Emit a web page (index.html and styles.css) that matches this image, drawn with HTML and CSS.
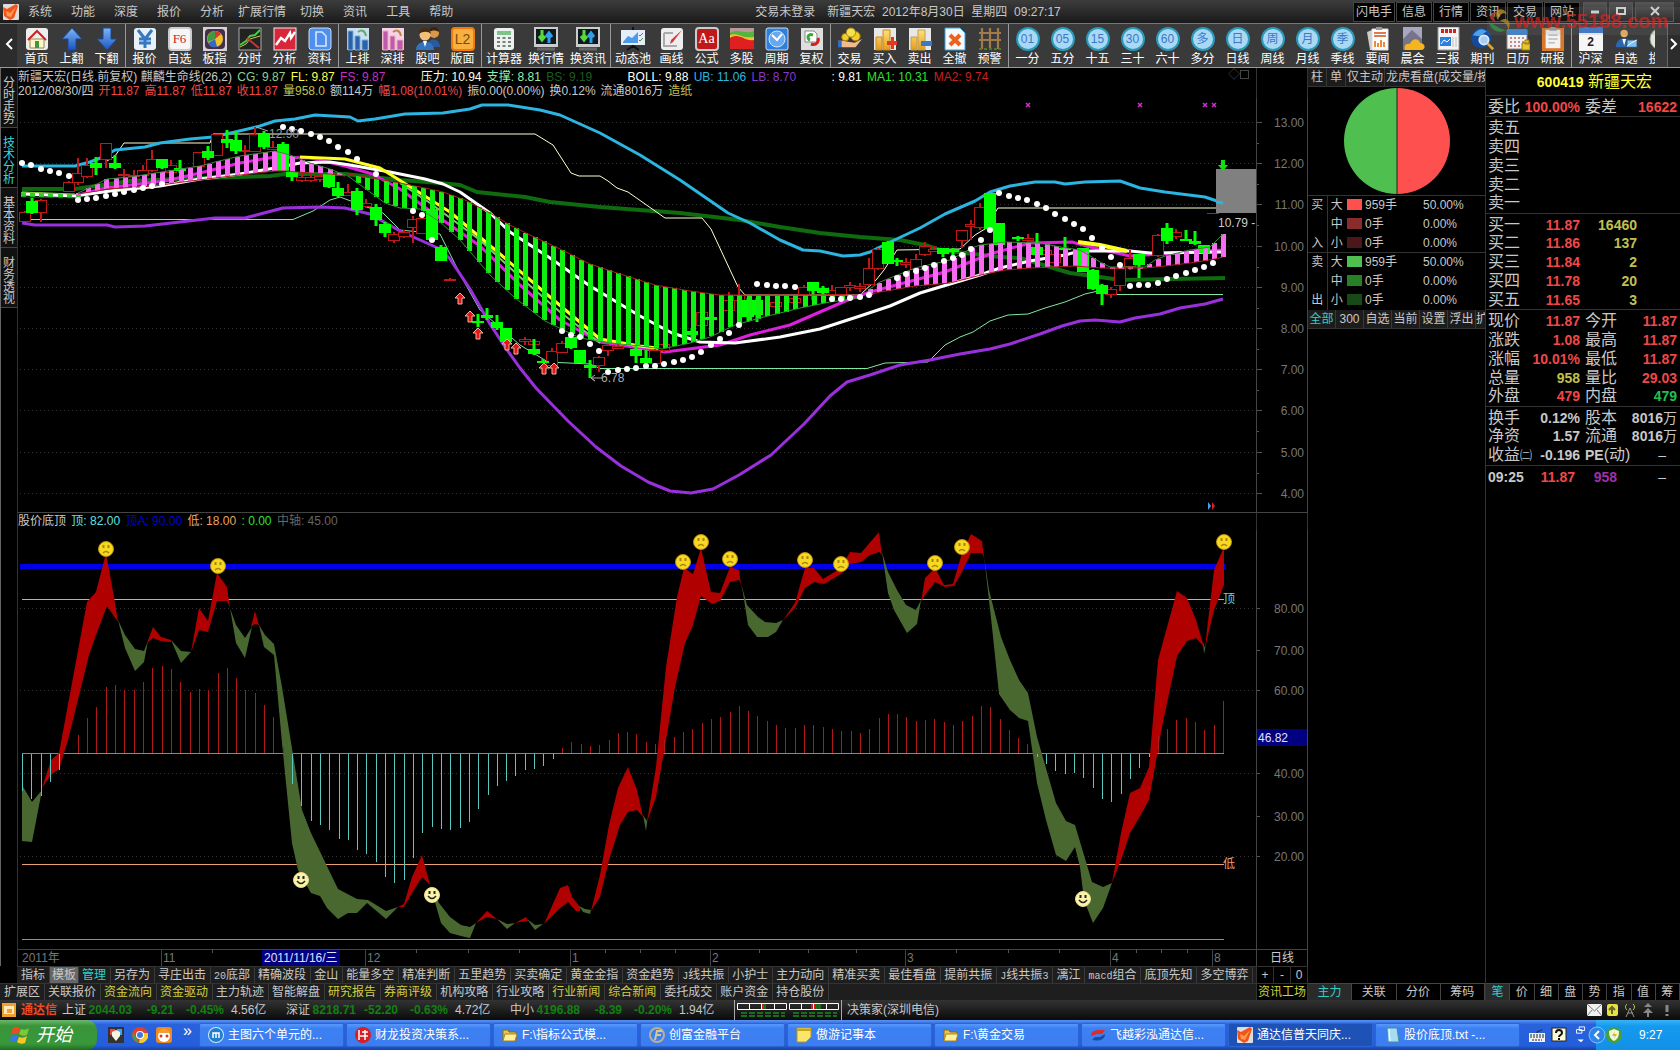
FILE: index.html
```html
<!DOCTYPE html>
<html lang="zh-CN">
<head>
    <meta charset="UTF-8">
    <meta name="viewport" content="width=device-width, initial-scale=1.0">
    <title>通达信</title>
    <link rel="stylesheet" href="styles.css">
</head>
<body>
<svg class="defs" aria-hidden="true">
    <defs>
        <linearGradient id="gBlue" x1="0" y1="0" x2="0" y2="1"><stop offset="0" stop-color="#7db6f5"/><stop offset="1" stop-color="#1a55c4"/></linearGradient>
        <linearGradient id="gGold" x1="0" y1="0" x2="0" y2="1"><stop offset="0" stop-color="#ffe27a"/><stop offset="1" stop-color="#e59a1c"/></linearGradient>
    </defs>
    <symbol id="logo" viewBox="0 0 16 16"><rect width="16" height="16" rx="1" fill="#ddd"/><path d="M0 3l4 2 9-5 2 2-4 12-4 2-6-4z" fill="#f2541b"/><path d="M3 7l4 2 6-6-5 10-4-1z" fill="#ff9a4d"/></symbol>
    <symbol id="home" viewBox="0 0 24 24"><rect x="1" y="1" width="22" height="22" rx="3" fill="#eee"/><path d="M5 12h14v9H5z" fill="#fff5c8" stroke="#9a8a4a"/><path d="M3 13l9-9 9 9" fill="none" stroke="#c22" stroke-width="2"/><path d="M10 14h4v7h-4z" fill="#3a9a3a"/></symbol>
    <symbol id="up" viewBox="0 0 24 24"><path d="M12 1l10 11h-6v11H8V12H2z" fill="url(#gBlue)" stroke="#1b4796"/></symbol>
    <symbol id="down" viewBox="0 0 24 24"><path d="M12 23l10-11h-6V1H8v11H2z" fill="url(#gBlue)" stroke="#1b4796"/></symbol>
    <symbol id="yen" viewBox="0 0 24 24"><rect x="1" y="1" width="22" height="22" rx="3" fill="#e8f0f8"/><path d="M5 3l7 9 7-9M12 12v9M6 12h12M6 16h12" fill="none" stroke="#3578c2" stroke-width="3"/></symbol>
    <symbol id="pie" viewBox="0 0 24 24"><rect width="24" height="24" fill="#d8d0d4"/><rect x="2" y="2" width="20" height="20" rx="4" fill="#40304e"/><circle cx="12" cy="12" r="8" fill="#f0c22a"/><path d="M12 12V4a8 8 0 0 0-7 11z" fill="#3f9a3f"/><path d="M12 12l-7 4a8 8 0 0 0 9 4z" fill="#3668c8"/><path d="M12 12V4a8 8 0 0 1 6 3z" fill="#d33"/></symbol>
    <symbol id="fen" viewBox="0 0 24 24"><rect x="1" y="1" width="22" height="22" fill="#222" stroke="#aaa"/><path d="M2 18l6-4 4-5 5-1 5-5" fill="none" stroke="#4c4" stroke-width="2"/><path d="M2 20l6-3 4-5 10-3" fill="none" stroke="#cc4"/><path d="M9 11l6 5 6 5" fill="none" stroke="#c33" stroke-width="2"/></symbol>
    <symbol id="zig" viewBox="0 0 24 24"><rect x="1" y="1" width="22" height="22" fill="#d8263a" stroke="#eee"/><path d="M3 18l5-7 4 3 5-8 1 5 4-6" fill="none" stroke="#fff" stroke-width="2.4"/></symbol>
    <symbol id="doc" viewBox="0 0 24 24"><rect x="1" y="1" width="22" height="22" rx="3" fill="#4f8ff0" stroke="#cde"/><path d="M8 5h6l4 4v10H8z" fill="none" stroke="#d6e7ff" stroke-width="1.6"/></symbol>
    <symbol id="rank" viewBox="0 0 24 24"><rect x="1" y="1" width="22" height="22" fill="#c9dff2"/><path d="M2 4h5v19H2zM9 9h5v14H9zM16 13h6v10h-6z" fill="#2b63a8" stroke="#7aa7d8"/><path d="M12 5c4-3 7-1 8 4" fill="none" stroke="#6a6" stroke-width="2"/></symbol>
    <symbol id="rank2" viewBox="0 0 24 24"><rect x="1" y="1" width="22" height="22" fill="#f7d3ea"/><path d="M2 4h5v19H2zM9 9h5v14H9zM16 13h6v10h-6z" fill="#bf5bab" stroke="#eab"/><path d="M12 5c4-3 7-1 8 4" fill="none" stroke="#b84" stroke-width="2"/></symbol>
    <symbol id="users" viewBox="0 0 24 24"><circle cx="18" cy="6" r="5" fill="#d8974a"/><path d="M13 5c0-7 10-7 10 0-3-2-7-2-10 0z" fill="#3a2410"/><path d="M11 20c0-10 13-10 13 0z" fill="#2a5a9c"/><circle cx="9" cy="8" r="5.500" fill="#f3c07a"/><path d="M3 7c0-8 11-8 12 0-3-3-8-3-12 0z" fill="#4a2c10"/><path d="M0 23c0-11 18-11 18 0z" fill="#3573c0"/><path d="M7 14h4l-2 6z" fill="#fff"/></symbol>
    <symbol id="calc" viewBox="0 0 24 24"><rect x="2" y="1" width="20" height="22" rx="3" fill="#eef2ee"/><rect x="5" y="4" width="14" height="4" fill="#7cc48a"/><path d="M5 11h14M5 15h14M5 19h14" stroke="#78827c" stroke-width="2" stroke-dasharray="3 2.500"/></symbol>
    <symbol id="screen" viewBox="0 0 24 24"><path d="M0 0h24v20H0z" fill="#ccc"/><path d="M2 2h20v15H2z" fill="#0c1a20"/><path d="M8 3v9M5 9l3 4 3-4" stroke="#5ad83a" stroke-width="3" fill="none"/><path d="M15 16V7M12 10l3-4 3 4" stroke="#2e9fe8" stroke-width="3" fill="none"/><path d="M3 22h18" stroke="#666" stroke-width="3"/></symbol>
    <symbol id="board" viewBox="0 0 24 24"><path d="M0 3h24v15H0z" fill="#e3eefa"/><path d="M2 15l5-6 4 2 6-6v11H2z" fill="#4d9be6"/><path d="M18 8l1 1 3-3M18 13l1 1 3-3" stroke="#4a8a4a" fill="none"/><path d="M12 0v3M12 18v3M6 23l6-4 6 4" stroke="#111" stroke-width="2" fill="none"/></symbol>
    <symbol id="draw" viewBox="0 0 24 24"><rect x="1" y="1" width="22" height="22" rx="3" fill="#eee"/><path d="M4 6h9M4 6v13h13" stroke="#aaa" stroke-width="2" fill="none"/><path d="M22 3l-9 12-3 2 1-4z" fill="#d23a3a"/></symbol>
    <symbol id="multi" viewBox="0 0 24 24"><path d="M0 1h24v21H0z" fill="#b99"/><path d="M0 6c8-5 14 2 24-2v18H0z" fill="#54b43c"/><path d="M0 8c8-3 12 4 24 2v11H0z" fill="#f0c22c"/><path d="M0 11c10-6 14 4 24 2v9H0z" fill="#e02020"/></symbol>
    <symbol id="clock" viewBox="0 0 24 24"><rect x="1" y="1" width="22" height="22" rx="2" fill="#2f7fdc" stroke="#cde"/><circle cx="12" cy="12" r="8" fill="#66a9ee" stroke="#cfe5ff"/><path d="M7 8l5 5 5-6" stroke="#fff" stroke-width="2" fill="none"/></symbol>
    <symbol id="restore" viewBox="0 0 24 24"><rect x="1" y="1" width="22" height="22" fill="#dedede"/><path d="M5 4h9l3 3v8H5z" fill="#fff" stroke="#888"/><path d="M13 8c-6-2-6 4-3 5" stroke="#38a838" stroke-width="3" fill="none"/><path d="M11 17c6 2 8-3 7-6" stroke="#c22" stroke-width="3" fill="none"/></symbol>
    <symbol id="trade" viewBox="0 0 26 24"><circle cx="8" cy="10" r="4" fill="#f2cf28" stroke="#a57d0c"/><circle cx="19" cy="9" r="5" fill="#f2cf28" stroke="#a57d0c"/><circle cx="14" cy="5" r="5" fill="#f8e050" stroke="#a57d0c"/><path d="M0 14h5l6 1 7 1 8-4-7 9H5l-5-1z" fill="#f2b98a"/><path d="M0 14h4v7H0z" fill="#2a6fd0"/></symbol>
    <symbol id="buy" viewBox="0 0 24 24"><rect x="1" y="1" width="22" height="22" fill="#e8e8e8"/><path d="M3 10h6v13H3zM10 3h7v20h-7z" fill="url(#gGold)" stroke="#c88a1a"/><path d="M14 14h4v-4h3v4h3v4h-3v4h-3v-4h-4z" fill="#e03a22"/></symbol>
    <symbol id="sell" viewBox="0 0 24 24"><rect x="1" y="1" width="22" height="22" fill="#e8e8e8"/><path d="M3 10h6v13H3zM10 3h7v20h-7z" fill="url(#gGold)" stroke="#b8a05a"/><path d="M13 14h11v5H13z" fill="#3a78c8"/></symbol>
    <symbol id="cancel" viewBox="0 0 24 24"><path d="M2 1h15l5 5v17H2z" fill="#f4fbff" stroke="#3aa0d8"/><path d="M7 8l10 10M17 8L7 18" stroke="#f0621c" stroke-width="4"/></symbol>
    <symbol id="fence" viewBox="0 0 24 24"><path d="M4 1v21M12 1v21M20 1v21M1 6h22M1 13h22" stroke="#a07a4a" stroke-width="2.200"/><path d="M1 22h22" stroke="#4a7a2a" stroke-width="2" stroke-dasharray="3 2"/></symbol>
    <symbol id="news" viewBox="0 0 24 24"><path d="M1 5l5-2 3 20H4z" fill="#ccc"/><path d="M6 2h16v21H6z" fill="#fff" stroke="#ddd"/><path d="M8 6h12M8 9h12" stroke="#e07a4a" stroke-width="2"/><path d="M9 20v-6M12 20v-4M15 20v-7M18 20v-5" stroke="#f08a3a" stroke-width="2"/><path d="M10 0h6v3h-6z" fill="#999"/></symbol>
    <symbol id="cloud" viewBox="0 0 24 24"><path d="M2 0h19v23H2z" fill="#76738c"/><path d="M2 12l9-9 10 9V0H2z" fill="#a9a7c0"/><path d="M4 23c-2-6 3-7 5-6 2-6 9-6 10-1 6 0 6 7 1 7z" fill="#f4b51e"/></symbol>
    <symbol id="paper" viewBox="0 0 24 24"><path d="M2 0h21v23H2z" fill="#f4f4f4" stroke="#999"/><path d="M5 4h15" stroke="#c22" stroke-width="4" stroke-dasharray="3 1"/><rect x="4" y="10" width="11" height="9" fill="#2b7fe0"/><path d="M5 17l3-4 3 2 3-3" stroke="#fff" fill="none"/><path d="M17 10v10M20 10v10" stroke="#bbb"/></symbol>
    <symbol id="globe" viewBox="0 0 26 24"><circle cx="11" cy="11" r="11" fill="#134a9c"/><path d="M2 8c5-8 12-8 15-4-4 2-5 5-9 5z" fill="#4fa0ea"/><circle cx="14" cy="13" r="5" fill="#a9cdf2" stroke="#dce9f8" stroke-width="2"/><path d="M18 17l6 6" stroke="#e8a020" stroke-width="3"/></symbol>
    <symbol id="cal" viewBox="0 0 24 24"><path d="M1 3h20v19H1z" fill="#f2f2f2" stroke="#888"/><path d="M1 2h20v6H1z" fill="#3f82cc"/><path d="M4 11h15M4 15h15M4 19h15" stroke="#c88" stroke-width="2" stroke-dasharray="2 2"/><path d="M16 16h8v7h-8zM19 13h4v4h-4z" fill="#eac52a" stroke="#9a7a10"/></symbol>
    <symbol id="clip" viewBox="0 0 26 26"><path d="M1 1h24v25H1z" fill="#d9772a"/><path d="M5 3h16v20H5z" fill="#f2f2f2"/><path d="M9 0h8v4H9z" fill="#999"/><path d="M8 9h10M8 13h10M8 17h7" stroke="#bbb" stroke-width="1.500"/></symbol>
    <symbol id="man" viewBox="0 0 26 24"><circle cx="11" cy="6" r="4" fill="#e8b060"/><path d="M2 21c0-13 18-13 18 0z" fill="#2c66b0"/><path d="M9 12h4l-2 7z" fill="#fff"/><path d="M14 13h11v8H14z" fill="#7fc0f0" stroke="#246"/><path d="M14 20l5-4 6-3" stroke="#fff" fill="none"/></symbol>
    <symbol id="disc" viewBox="0 0 24 24"><circle cx="12" cy="12" r="11" fill="#dfe6dc" stroke="#8a9a88"/><path d="M12 4v8l6 3" stroke="#595" fill="none" stroke-width="2"/></symbol>
    <symbol id="folder" viewBox="0 0 16 16"><path d="M1 3h5l1 2h7v9H1z" fill="#e9c652" stroke="#8a6a10"/><path d="M3 7h12l-2 7H1z" fill="#fff0a0" stroke="#a8861c"/></symbol>
</svg>

<header class="titlebar">
    <svg class="app-logo"><use href="#logo"/></svg>
    <nav class="menu">
        <a href="#">系统</a><a href="#">功能</a><a href="#">深度</a><a href="#">报价</a><a href="#">分析</a><a href="#" class="wide">扩展行情</a><a href="#">切换</a><a href="#">资讯</a><a href="#">工具</a><a href="#">帮助</a>
    </nav>
    <div class="caption"><span>交易未登录</span><span>新疆天宏&nbsp; 2012年8月30日&nbsp; 星期四&nbsp; 09:27:17</span></div>
    <div class="top-buttons">
        <button>闪电手</button><button>信息</button><button>行情</button><button>资讯</button><button>交易</button><button>网站</button>
    </div>
    <div class="win-buttons">
        <button aria-label="最小化"><svg viewBox="0 0 10 10"><path d="M1 6h8" stroke="#ddd" stroke-width="3"/></svg></button>
        <button aria-label="还原"><svg viewBox="0 0 10 10"><path d="M1 2h8v6H1z" fill="none" stroke="#ddd" stroke-width="2"/></svg></button>
        <button aria-label="关闭" class="close"><svg viewBox="0 0 10 10"><path d="M1 1l8 8M9 1L1 9" stroke="#ddd" stroke-width="2"/></svg></button>
    </div>
    <div class="watermark">
        <svg viewBox="0 0 24 26"><path d="M9 14C-1 12 3 2 11 5c-5 1-5 5-2 9z" fill="#d04030"/><path d="M11 12C5 2 15-3 20 6c-5-2-7 1-9 6z" fill="#c8a030"/><path d="M13 13c8-6 12 3 8 9 0-6-3-8-8-9z" fill="#b89030"/><path d="M2 14c2 9 10 12 17 8-7-1-9-4-17-8z" fill="#3a9a50"/></svg>
        <b>www.55188.com</b>
    </div>
</header>

<div class="toolbar">
    <button class="scroll" aria-label="向左"><svg viewBox="0 0 8 12"><path d="M7 1L2 6l5 5" fill="none" stroke="#fff" stroke-width="2"/></svg></button>
    <div class="group first">
        <button><svg><use href="#home"/></svg>首页</button>
        <button><svg><use href="#up"/></svg>上翻</button>
        <button><svg><use href="#down"/></svg>下翻</button>
    </div>
    <div class="group">
        <button><svg><use href="#yen"/></svg>报价</button>
        <button><b class="tile f6">F6</b>自选</button>
        <button><svg><use href="#pie"/></svg>板指</button>
        <button><svg><use href="#fen"/></svg>分时</button>
        <button><svg><use href="#zig"/></svg>分析</button>
        <button><svg><use href="#doc"/></svg>资料</button>
    </div>
    <div class="group">
        <button><svg><use href="#rank"/></svg>上排</button>
        <button><svg><use href="#rank2"/></svg>深排</button>
        <button><svg><use href="#users"/></svg>股吧</button>
        <button><b class="tile l2">L2</b>版面</button>
    </div>
    <div class="group">
        <button class="w3"><svg><use href="#calc"/></svg>计算器</button>
        <button class="w3"><svg><use href="#screen"/></svg>换行情</button>
        <button class="w3"><svg><use href="#screen"/></svg>换资讯</button>
    </div>
    <div class="group">
        <button class="w3"><svg><use href="#board"/></svg>动态池</button>
        <button><svg><use href="#draw"/></svg>画线</button>
        <button><b class="tile aa">Aa</b>公式</button>
        <button><svg><use href="#multi"/></svg>多股</button>
        <button><svg><use href="#clock"/></svg>周期</button>
        <button><svg><use href="#restore"/></svg>复权</button>
    </div>
    <div class="group">
        <button><svg><use href="#trade"/></svg>交易</button>
        <button><svg><use href="#buy"/></svg>买入</button>
        <button><svg><use href="#sell"/></svg>卖出</button>
        <button><svg><use href="#cancel"/></svg>全撤</button>
        <button><svg><use href="#fence"/></svg>预警</button>
    </div>
    <div class="group">
        <button><i>01</i>一分</button>
        <button><i>05</i>五分</button>
        <button><i>15</i>十五</button>
        <button><i>30</i>三十</button>
        <button><i>60</i>六十</button>
        <button><i>多</i>多分</button>
        <button><i>日</i>日线</button>
        <button><i>周</i>周线</button>
        <button><i>月</i>月线</button>
        <button><i>季</i>季线</button>
        <button><svg><use href="#news"/></svg>要闻</button>
        <button><svg><use href="#cloud"/></svg>晨会</button>
        <button><svg><use href="#paper"/></svg>三报</button>
        <button><svg><use href="#globe"/></svg>期刊</button>
        <button><svg><use href="#cal"/></svg>日历</button>
        <button><svg><use href="#clip"/></svg>研报</button>
    </div>
    <div class="group last">
        <button><b class="tile day2">2</b>沪深</button>
        <button><svg><use href="#man"/></svg>自选</button>
        <button><svg><use href="#disc"/></svg>投顾</button>
    </div>
    <button class="scroll right" aria-label="向右"><svg viewBox="0 0 8 12"><path d="M1 1l5 5-5 5" fill="none" stroke="#fff" stroke-width="2"/></svg></button>
</div>

<main class="workspace">
    <section class="left">
        <div class="chart-area">
            <nav class="side-tabs">
                <button>分时走势</button>
                <button class="on">技术分析</button>
                <button>基本资料</button>
                <button>财务透视</button>
            </nav>
            <div class="charts">
                <div class="info">
                    <div class="info-text">
                        <p><span class="lg">新疆天宏(日线.前复权) 麒麟生命线(26,2)</span> <span class="cg">CG: 9.87</span> <span class="fl">FL: 9.87</span> <span class="fs">FS: 9.87</span>
                        <span class="cream far">压力: 10.94</span> <span class="mint">支撑: 8.81</span> <span class="dg">BS: 9.19</span>
                        <span class="white far">BOLL: 9.88</span> <span class="sky">UB: 11.06</span> <span class="violet">LB: 8.70</span>
                        <span class="white far">: 9.81</span> <span class="lime">MA1: 10.31</span> <span class="red">MA2: 9.74</span></p>
                        <p class="day"><span class="lg">2012/08/30/四</span><span class="up">开11.87</span><span class="up">高11.87</span><span class="up">低11.87</span><span class="up">收11.87</span><span class="vol">量958.0</span><span class="lg">额114万</span><span class="up">幅1.08(10.01%)</span><span class="lg">振0.00(0.00%)</span><span class="lg">换0.12%</span><span class="lg">流通8016万</span><span class="vol">造纸</span></p>
                    </div>
                    <div class="info-marks">◇<i></i></div>
                    <div class="info-axis"></div>
                </div>
                <svg id="price" class="plot" viewBox="18 98 1290 414"></svg>
                <div class="info sub">
                    <p class="info-text"><span class="lg">股价底顶</span> <span class="cy">顶: 82.00</span> <span class="bl">顶A: 90.00</span> <span class="or">低: 18.00</span> <span class="lime">: 0.00</span> <span class="gy">中轴: 45.00</span></p>
                    <div class="info-axis"></div>
                </div>
                <svg id="osc" class="plot" viewBox="18 530 1290 436"></svg>
            </div>
        </div>
        <div class="bar indent">
            <div class="tabs">
                <button>指标</button><button class="sel">模板</button><button class="cyan">管理</button><button>另存为</button><button>寻庄出击</button><button><tt>20</tt>底部</button><button>精确波段</button><button>金山</button><button>能量多空</button><button>精准判断</button><button>五里趋势</button><button>买卖确定</button><button>黄金金指</button><button>资金趋势</button><button><tt>J</tt>线共振</button><button>小护士</button><button>主力动向</button><button>精准买卖</button><button>最佳看盘</button><button>提前共振</button><button><tt>J</tt>线共振<tt>3</tt></button><button>漓江</button><button><tt>macd</tt>组合</button><button>底顶先知</button><button>多空博弈</button>
            </div>
            <div class="zoom"><button>+</button><button>-</button><button>0</button></div>
        </div>
        <div class="bar">
            <div class="tabs">
                <button>扩展区</button><button>关联报价</button><button class="yel">资金流向</button><button class="yel">资金驱动</button><button>主力轨迹</button><button>智能解盘</button><button class="yel">研究报告</button><button class="yel">券商评级</button><button>机构攻略</button><button>行业攻略</button><button class="yel">行业新闻</button><button class="yel">综合新闻</button><button>委托成交</button><button>账户资金</button><button>持仓股份</button>
            </div>
            <div class="zoom"><button class="yel">资讯工场</button></div>
        </div>
    </section>

    <section class="flow">
        <div class="cells head"><button>柱</button><button>单</button><button>仅主动</button><button>龙虎看盘(成交量/按</button></div>
        <div class="pie">
            <svg viewBox="0 0 108 108"><path d="M54 1a53 53 0 0 0 0 106z" fill="#4fc04f"/><path d="M54 1a53 53 0 0 1 0 106z" fill="#ff5050"/><path d="M54 1v106" stroke="#202020"/></svg>
        </div>
        <table class="deals">
            <tbody>
                <tr><th>买</th><th>大</th><td><i class="r1"></i>959手</td><td>50.00%</td></tr>
                <tr><th></th><th>中</th><td><i class="r2"></i>0手</td><td>0.00%</td></tr>
                <tr><th>入</th><th>小</th><td><i class="r3"></i>0手</td><td>0.00%</td></tr>
            </tbody>
            <tbody>
                <tr><th>卖</th><th>大</th><td><i class="g1"></i>959手</td><td>50.00%</td></tr>
                <tr><th></th><th>中</th><td><i class="g2"></i>0手</td><td>0.00%</td></tr>
                <tr><th>出</th><th>小</th><td><i class="g3"></i>0手</td><td>0.00%</td></tr>
            </tbody>
        </table>
        <div class="cells filter"><button class="cyan">全部</button><button>300</button><button>自选</button><button>当前</button><button>设置</button><button>浮出</button><button>扩</button></div>
        <div class="foot"><button class="cyan">主力</button><button>关联</button><button>分价</button><button>筹码</button></div>
    </section>

    <section class="quote">
        <h1><b>600419</b> 新疆天宏</h1>
        <table>
            <tbody><tr><th>委比</th><td class="up">100.00%</td><th>委差</th><td class="up">16622</td></tr></tbody>
            <tbody>
                <tr><th>卖五</th><td></td><td></td><td></td></tr>
                <tr><th>卖四</th><td></td><td></td><td></td></tr>
                <tr><th>卖三</th><td></td><td></td><td></td></tr>
                <tr><th>卖二</th><td></td><td></td><td></td></tr>
                <tr><th>卖一</th><td></td><td></td><td></td></tr>
            </tbody>
            <tbody class="bids">
                <tr><th>买一</th><td class="up">11.87</td><td class="vol" colspan="2">16460</td></tr>
                <tr><th>买二</th><td class="up">11.86</td><td class="vol" colspan="2">137</td></tr>
                <tr><th>买三</th><td class="up">11.84</td><td class="vol" colspan="2">2</td></tr>
                <tr><th>买四</th><td class="up">11.78</td><td class="vol" colspan="2">20</td></tr>
                <tr><th>买五</th><td class="up">11.65</td><td class="vol" colspan="2">3</td></tr>
            </tbody>
            <tbody>
                <tr><th>现价</th><td class="up">11.87</td><th>今开</th><td class="up">11.87</td></tr>
                <tr><th>涨跌</th><td class="up">1.08</td><th>最高</th><td class="up">11.87</td></tr>
                <tr><th>涨幅</th><td class="up">10.01%</td><th>最低</th><td class="up">11.87</td></tr>
                <tr><th>总量</th><td class="vol">958</td><th>量比</th><td class="up">29.03</td></tr>
                <tr><th>外盘</th><td class="up">479</td><th>内盘</th><td class="dn">479</td></tr>
            </tbody>
            <tbody>
                <tr><th>换手</th><td>0.12%</td><th>股本</th><td>8016<span>万</span></td></tr>
                <tr><th>净资</th><td>1.57</td><th>流通</th><td>8016<span>万</span></td></tr>
                <tr><th>收益<small>㈡</small></th><td>-0.196</td><th><b>PE</b>(动)</th><td class="dash">–</td></tr>
            </tbody>
            <tbody>
                <tr><th><b>09:25</b></th><td class="up tick">11.87</td><td class="mg">958</td><td class="dash">–</td></tr>
            </tbody>
        </table>
        <div class="foot"><button class="cyan">笔</button><button>价</button><button>细</button><button>盘</button><button>势</button><button>指</button><button>值</button><button>筹</button></div>
    </section>
</main>

<div class="status">
    <svg class="st-icon" viewBox="0 0 14 14"><rect width="14" height="14" fill="#f0a030"/><rect x="2" y="3" width="10" height="8" fill="#ffe9b8"/><rect x="5" y="6" width="5" height="4" fill="#f0a030"/></svg>
    <b class="brand">通达信</b>
    <div class="index"><span>上证</span><b>2044.03</b><b>-9.21</b><b>-0.45%</b><span>4.56亿</span></div>
    <div class="index"><span>深证</span><b>8218.71</b><b>-52.20</b><b>-0.63%</b><span>4.72亿</span></div>
    <div class="index"><span>中小</span><b>4196.88</b><b>-8.39</b><b>-0.20%</b><span>1.94亿</span></div>
    <div class="gauges">
        <svg viewBox="0 0 50 16"><rect x="24" y="1" width="3" height="7" fill="#c22"/><rect x="27" y="1" width="2" height="7" fill="#1a6a1a"/><path d="M.5 1.500h49v6h-49zM12.500 1v7M24.500 1v7M37.500 1v7" fill="none" stroke="#fff"/><path d="M4 11h44M4 14h44" stroke="#177017" stroke-width="2" stroke-dasharray="6 2"/></svg>
        <svg viewBox="0 0 50 16"><rect x="22" y="1" width="4" height="7" fill="#c22"/><rect x="26" y="1" width="6" height="7" fill="#1a6a1a"/><path d="M.5 1.500h49v6h-49zM12.500 1v7M24.500 1v7M37.500 1v7" fill="none" stroke="#fff"/><path d="M4 11h44M4 14h44" stroke="#177017" stroke-width="2" stroke-dasharray="6 2"/></svg>
    </div>
    <span class="server">决策家(深圳电信)</span>
    <div class="st-tray">
        <svg viewBox="0 0 15 14"><rect y="1" width="15" height="12" fill="#f0f0f0"/><path d="M0 1l7.500 7L15 1M0 13l5-6M15 13l-5-6" stroke="#777" fill="none"/></svg>
        <svg viewBox="0 0 15 14"><rect x="2" y="1" width="11" height="12" rx="2" fill="#e8e040"/><path d="M7 11V5M4 7l3-3 3 3" stroke="#663" stroke-width="2" fill="none"/></svg>
        <svg viewBox="0 0 15 14"><path d="M7 5l-4 9M7 5l4 9M5 10h5" stroke="#998" fill="none"/><path d="M4 1c-2 2-2 4 0 6M10 1c2 2 2 4 0 6" stroke="#cc5" fill="none"/></svg>
        <svg viewBox="0 0 15 14"><path d="M7 0l4 4H3zM7 5l5 5H2zM6 10h2v4H6z" fill="#888"/></svg>
        <svg viewBox="0 0 10 14"><path d="M4 2h3v7H4zM4 11h3v2H4z" fill="#888"/></svg>
    </div>
</div>

<footer class="taskbar">
    <button class="start">
        <svg viewBox="0 0 20 20"><path d="M3 3c3-2 5-1 7 0L8 9C6 8 4 8 1 9z" fill="#f04a20"/><path d="M11 4c3 1 5 1 8-1l-2 7c-3 1-5 1-8-1z" fill="#7cc83a"/><path d="M1 11c3-2 5-1 7 0l-2 6c-2-1-4-1-6 0z" fill="#3a78e8"/><path d="M9 12c3 1 5 1 8-1l-2 7c-3 1-5 1-8-1z" fill="#f8c828"/></svg>
        开始
    </button>
    <div class="quick">
        <svg viewBox="0 0 16 16"><rect width="16" height="16" fill="#333"/><path d="M2 2h5v6H2z" fill="#e6484a"/><path d="M9 2h5v6H9z" fill="#4aa0e8"/><path d="M4 5l4-2 4 2v4l-4 5-4-5z" fill="#f4f4e0"/></svg>
        <svg viewBox="0 0 16 16"><circle cx="8" cy="8" r="8" fill="#e0402e"/><path d="M1 5l6 11A8 8 0 0 1 1 5z" fill="#3aa24a"/><path d="M16 6H9l-2 10A8 8 0 0 0 16 6z" fill="#f4cc2e"/><circle cx="8" cy="8" r="4" fill="#fff"/><circle cx="8" cy="8" r="3" fill="#3c7ae0"/></svg>
        <svg viewBox="0 0 16 16"><rect width="16" height="16" rx="3" fill="#f08a20"/><circle cx="8" cy="9" r="6" fill="#fff"/><path d="M2 6c2-6 10-6 12 0z" fill="#f0a030"/><circle cx="5" cy="9" r="1.500" fill="#d33"/><circle cx="11" cy="9" r="1.500" fill="#d33"/></svg>
        <span>»</span>
    </div>
    <div class="tasks">
        <button><svg viewBox="0 0 16 16"><circle cx="8" cy="8" r="8" fill="#cfe8fa"/><circle cx="8" cy="8" r="7" fill="#1f7ed0"/><path d="M5 11V6h6v5M8 6v5" stroke="#fff" stroke-width="1.500" fill="none"/></svg>主图六个单元的...</button>
        <button><svg viewBox="0 0 16 16"><circle cx="8" cy="8" r="8" fill="#d81e20"/><path d="M4 3v10M7 5h6M10 3v10M5 9h8" stroke="#fff" stroke-width="1.500"/></svg>财龙投资决策系...</button>
        <button><svg><use href="#folder"/></svg>F:\指标公式模...</button>
        <button><svg viewBox="0 0 16 16"><circle cx="8" cy="8" r="7" fill="none" stroke="#b8b098" stroke-width="2"/><path d="M6 13l2-9h5M7 8h5" stroke="#d8c890" stroke-width="2" fill="none"/></svg>创富金融平台</button>
        <button><svg viewBox="0 0 16 16"><path d="M1 1h14v9l-5 5H1z" fill="#fbe66a" stroke="#b8941c"/><path d="M1 3h14" stroke="#c9a41c" stroke-width="2"/></svg>傲游记事本</button>
        <button><svg><use href="#folder"/></svg>F:\黄金交易</button>
        <button><svg viewBox="0 0 16 16"><path d="M1 9c0-7 8-6 14-6l-3 4H7z" fill="#e02a22"/><path d="M15 7c0 7-8 7-13 6l3-3h5z" fill="#1a4aa8"/></svg>飞越彩泓通达信...</button>
        <button class="active"><svg><use href="#logo"/></svg>通达信普天同庆...</button>
        <button><svg viewBox="0 0 16 16"><path d="M3 1h10l2 14H4z" fill="#a8dcf0" stroke="#4a8aa8"/><path d="M5 2l1 12" stroke="#fff"/></svg>股价底顶.txt -...</button>
    </div>
    <div class="lang">
        <svg viewBox="0 0 16 16"><rect y="6" width="16" height="9" fill="#f0f0f0"/><path d="M1 8h14M1 10h14M3 13h10" stroke="#223" stroke-dasharray="2 1"/><path d="M8 6c0-4 3 0 5-4" stroke="#222" fill="none"/></svg>
        <svg viewBox="0 0 16 16"><rect x="1" y="1" width="14" height="13" fill="#fbfbd8" stroke="#222"/><path d="M5 6c0-4 6-4 6 0 0 2-3 2-3 4M8 11v2" stroke="#111" stroke-width="2" fill="none"/></svg>
        <svg viewBox="0 0 16 20"><path d="M6 1h6v4H6zM3 4h6v4H3z" fill="none" stroke="#fff"/><path d="M4 15h7l-3 3z" fill="#fff"/></svg>
    </div>
    <div class="tray">
        <svg class="chev" viewBox="0 0 18 18"><circle cx="9" cy="9" r="8" fill="#2a86e8" stroke="#7ec0ff"/><path d="M11 5L7 9l4 4" stroke="#fff" stroke-width="2" fill="none"/></svg>
        <svg viewBox="0 0 16 16"><circle cx="8" cy="8" r="8" fill="#4aa030"/><path d="M8 2l5 2c0 5-1 8-5 10-4-2-5-5-5-10z" fill="#eef6e0"/><path d="M9 4L6 9h3l-1 3 3-5H8z" fill="#e0b820"/></svg>
        <span>9:27</span>
    </div>
</footer>
<script src="chart.js"></script>
</body>
</html>
```

FILE: styles.css
```css
* {
    box-sizing: border-box;
}
body {
    margin: 0;
    min-height: 100vh;
    display: flex;
    flex-direction: column;
    background: #000;
    color: #c8c8c8;
    font: 12px/16px "Liberation Sans", "Noto Sans CJK SC", sans-serif;
    overflow-x: hidden;
}
p, h1 {
    margin: 0;
}
a {
    color: inherit;
    text-decoration: none;
}
button {
    margin: 0;
    padding: 0;
    border: 0;
    background: none;
    color: inherit;
    font: inherit;
    white-space: nowrap;
}
i {
    font-style: normal;
}
.defs {
    position: absolute;
    width: 0;
    height: 0;
}

/* title bar */
.titlebar {
    position: relative;
    display: flex;
    align-items: center;
    height: 23px;
    background: linear-gradient(#3c3c3c, #1a1a1a);
    padding-right: 6px;
}
.app-logo {
    width: 16px;
    height: 16px;
    margin-left: 3px;
}
.menu {
    display: flex;
}
.menu a {
    padding: 0 10px 0 9px;
}
.menu .wide {
    padding: 0 5px 0 4px;
}
.caption {
    flex: 1;
    display: flex;
    justify-content: center;
    gap: 12px;
}
.top-buttons {
    display: flex;
    gap: 1px;
    background: #000;
}
.top-buttons button {
    padding: 0 5px;
    height: 20px;
    border: 1px solid #444;
}
.top-buttons button:first-child {
    padding: 0 2px;
}
.win-buttons {
    display: flex;
    gap: 2px;
    margin-left: 3px;
}
.win-buttons button {
    width: 24px;
    height: 20px;
    border: 1px solid #555;
    background: linear-gradient(#555, #222);
}
.win-buttons .close {
    width: 39px;
}
.win-buttons svg {
    width: 10px;
    height: 10px;
}
.watermark {
    position: absolute;
    right: 0;
    top: 7px;
    z-index: 2;
    display: flex;
    align-items: center;
    height: 28px;
    padding-right: 12px;
    gap: 3px;
    background: rgba(130, 130, 130, .2);
    opacity: .75;
    pointer-events: none;
}
.watermark svg {
    width: 24px;
    height: 26px;
}
.watermark b {
    font-size: 20px;
    color: #d02828;
}

/* toolbar */
.toolbar {
    display: flex;
    height: 45px;
    background: #3a3a3a;
    border-top: 1px solid #777;
    border-bottom: 1px solid #999;
    color: #fff;
}
.scroll {
    flex: none;
    width: 17px;
    background: #2c2c2c;
}
.scroll.right {
    width: 13px;
    border-left: 1px solid #666;
}
.scroll svg {
    width: 8px;
    height: 12px;
}
.group {
    flex: none;
    display: flex;
    padding: 0 1px;
    border-left: 1px solid #999;
}
.group.first {
    border-left-color: #3a3a3a;
}
.group.last {
    flex: 1;
    min-width: 0;
    margin-right: 12px;
    overflow: hidden;
}
.group button {
    flex: none;
    width: 35px;
    padding-top: 3px;
    display: flex;
    flex-direction: column;
    align-items: center;
    line-height: 16px;
}
.group .w3 {
    width: 42px;
}
.group svg {
    width: 24px;
    height: 24px;
}
.group i, .tile {
    width: 24px;
    height: 24px;
    line-height: 20px;
    text-align: center;
}
.group i {
    border: 2px solid #2a9ab8;
    border-radius: 50%;
    background: #a8d8f4;
    color: #3a78c8;
}
.tile {
    border: 2px solid #ccc;
    border-radius: 4px;
    font-weight: normal;
}
.f6 {
    background: #f6f6f6;
    color: #c22;
    font-family: "Liberation Serif", serif;
    font-size: 13px;
}
.l2 {
    border-color: #f07a10;
    background: #f8b040;
    color: #7a4a10;
    font-size: 14px;
}
.aa {
    background: #c01818;
    color: #fff;
    font-family: "Liberation Serif", serif;
    font-size: 14px;
}
.day2 {
    border: 0;
    border-top: 6px solid #3a7ad0;
    border-radius: 0;
    background: #f6f6f6;
    color: #222;
    font-weight: bold;
    line-height: 18px;
}

/* workspace */
.workspace {
    flex: 1;
    display: flex;
}
.left {
    flex: 1;
    min-width: 0;
    display: flex;
    flex-direction: column;
}
.chart-area {
    flex: 1;
    display: flex;
}
.side-tabs {
    width: 18px;
    border-left: 1px solid #666;
    border-right: 1px solid #333;
}
.side-tabs button {
    display: block;
    width: 16px;
    height: 60px;
    padding: 6px 2px 0;
    border-bottom: 1px solid #444;
    background: #111;
    line-height: 12px;
    white-space: normal;
    word-break: break-all;
}
.side-tabs .on {
    background: #000;
    color: #35dada;
}
.charts {
    flex: 1;
    min-width: 0;
}
.plot {
    display: block;
    width: 100%;
    height: auto;
}
.info {
    display: flex;
    height: 30px;
    line-height: 14px;
    white-space: nowrap;
}
.info.sub {
    height: 18px;
    line-height: 16px;
    border-top: 1px solid #444;
}
.info-text {
    flex: 1;
    min-width: 0;
    overflow: hidden;
    padding-top: 2px;
}
.sub .info-text {
    padding-top: 0;
}
.info-text span {
    margin-right: 2px;
}
.info-text .far {
    margin-left: 30px;
}
.info-text .day span {
    margin-right: 5px;
}
.info-marks {
    color: #444;
    width: 28px;
}
.info-marks i {
    display: inline-block;
    width: 9px;
    height: 9px;
    border: 1px solid #444;
}
.info-axis {
    width: 52px;
    border-left: 1px solid #333;
    border-right: 1px solid #333;
}
.lg { color: #c8c8c8; }
.cg { color: #8fd08f; }
.fl { color: #ffff50; }
.fs { color: #c030c0; }
.cream { color: #ffffe0; }
.mint { color: #90f0b0; }
.dg { color: #1e5a1e; }
.white { color: #fff; }
.sky { color: #2bb5e0; }
.violet { color: #8a38c8; }
.lime { color: #30e030; }
.red { color: #c82020; }
.up { color: #f04848; }
.dn { color: #20c050; }
.vol { color: #c0c050; }
.cy { color: #60e0e0; }
.bl { color: #0000d0; }
.or { color: #f0a060; }
.gy { color: #666; }
.mg { color: #a030a8; }
.cyan { color: #30d0c8; }
.yel { color: #d0d040; }

.bar {
    display: flex;
    height: 17px;
    padding-left: 1px;
    background: #1e1e1e;
    border-top: 1px solid #333;
    line-height: 16px;
}
.indent {
    margin-left: 17px;
}
.tabs {
    flex: 1;
    min-width: 0;
    overflow: hidden;
    display: flex;
}
.tabs button {
    flex: none;
    padding: 0 4px 0 3px;
    border-right: 1px solid #3a3a3a;
    line-height: 15px;
}
.tabs .sel {
    padding: 0 2px;
    background: #666;
}
.tabs tt {
    font: 10px "Liberation Mono", monospace;
}
.zoom {
    width: 52px;
    display: flex;
    background: #000;
    border-left: 1px solid #333;
    border-right: 1px solid #333;
}
.zoom button {
    flex: 1;
    line-height: 15px;
    border-right: 1px solid #333;
}
.zoom button:last-child {
    border-right: 0;
}

/* money flow */
.flow {
    width: 178px;
    display: flex;
    flex-direction: column;
    border-right: 1px solid #333;
}
.cells {
    display: flex;
    height: 19px;
    overflow: hidden;
    background: #1c1c1c;
    border-bottom: 1px solid #333;
}
.cells button {
    flex: none;
    padding: 0 1px;
    border-right: 1px solid #383838;
    min-width: 19px;
}
.head button:nth-child(4) {
    border-right: 0;
}
.filter button {
    min-width: 28px;
}
.filter button:last-child {
    min-width: 0;
    padding: 0;
    border-right: 0;
}
.pie {
    height: 108px;
    text-align: center;
}
.pie svg {
    width: 108px;
    height: 108px;
}
.deals {
    width: 100%;
    border-collapse: collapse;
    table-layout: fixed;
}
.deals tbody {
    border-top: 1px solid #333;
}
.deals tr {
    height: 19px;
}
.deals th, .deals td {
    padding: 0;
    font-weight: normal;
    text-align: left;
}
.deals th {
    width: 19px;
    text-align: center;
}
.deals th:first-child {
    border-right: 1px solid #333;
}
.deals td:nth-child(3) {
    width: 77px;
}
.deals td i {
    display: inline-block;
    width: 15px;
    height: 11px;
    margin: 0 3px 0 1px;
    vertical-align: -1px;
}
.r1 { background: #ff5050; }
.r2 { background: #8a2c2c; }
.r3 { background: #4a1818; }
.g1 { background: #4fc04f; }
.g2 { background: #278027; }
.g3 { background: #184a18; }
.foot {
    margin-top: auto;
    display: flex;
    height: 17px;
    border-top: 1px solid #444;
}
.foot button {
    flex: 1;
    border-right: 1px solid #444;
}
.foot .cyan {
    background: #2a2a2a;
}

/* quote */
.quote {
    width: 194px;
    display: flex;
    flex-direction: column;
}
.quote h1 {
    height: 27px;
    padding-right: 28px;
    text-align: right;
    color: #ff3;
    font-size: 16px;
    font-weight: normal;
    line-height: 27px;
}
.quote h1 b {
    font-size: 14px;
}
.quote table {
    width: 100%;
    table-layout: fixed;
    border-collapse: collapse;
}
.quote tbody {
    border-top: 1px solid #333;
}
.quote tr {
    height: 19px;
}
.quote th, .quote td {
    padding: 0;
    white-space: nowrap;
    line-height: 18px;
}
.quote th {
    width: 37px;
    padding-left: 2px;
    font-size: 16px;
    font-weight: normal;
    text-align: left;
}
.quote th b {
    font-size: 14px;
}
.quote small {
    font-size: 12px;
}
.quote td {
    padding-right: 3px;
    font-size: 14px;
    font-weight: bold;
    text-align: right;
}
.quote tr:first-child th, .quote tr:first-child td {
    padding-top: 2px;
}
.quote td span {
    font-weight: normal;
}
.quote .bids .vol {
    padding-right: 43px;
}
.quote .dash {
    padding-right: 14px;
    font-weight: normal;
}
.quote .tick {
    padding-right: 8px;
}

/* index status line */
.status {
    display: flex;
    align-items: center;
    height: 20px;
    padding: 0 6px 0 2px;
    background: linear-gradient(#333, #0a0a0a);
}
.st-icon {
    width: 14px;
    height: 14px;
    margin-right: 5px;
}
.brand {
    width: 41px;
    color: #f04a20;
}
.index {
    display: grid;
    grid-template-columns: 24px 46px 42px 50px 62px;
}
.index b {
    color: #128012;
    text-align: right;
}
.index span:last-child {
    padding-left: 7px;
}
.gauges {
    display: flex;
    gap: 2px;
    height: 20px;
    padding: 2px;
    border-left: 1px solid #aaa;
    border-right: 1px solid #aaa;
}
.gauges svg {
    width: 50px;
    height: 16px;
}
.server {
    margin-left: 5px;
}
.st-tray {
    margin-left: auto;
    display: flex;
    gap: 3px;
}
.st-tray svg {
    width: 15px;
    height: 14px;
}

/* taskbar */
.taskbar {
    display: flex;
    align-items: stretch;
    height: 30px;
    background: linear-gradient(#5a94f4, #2a62dc 15%, #245edb 85%, #1941a5);
    color: #fff;
}
.start {
    width: 97px;
    display: flex;
    align-items: center;
    gap: 6px;
    padding-left: 10px;
    border-radius: 0 10px 10px 0;
    background: linear-gradient(#6ab86a, #3a943a 20%, #37983a 80%, #246a24);
    font-size: 18px;
    font-style: italic;
}
.start svg {
    width: 20px;
    height: 20px;
}
.quick {
    width: 102px;
    display: flex;
    align-items: center;
    gap: 8px;
    padding-left: 11px;
}
.quick svg {
    width: 16px;
    height: 16px;
}
.quick span {
    padding: 0 0 8px 3px;
    font-size: 16px;
}
.tasks {
    flex: 1;
    min-width: 0;
    display: flex;
    gap: 2px;
    padding: 3px 0;
}
.tasks button {
    flex: 1;
    min-width: 0;
    display: flex;
    align-items: center;
    gap: 4px;
    padding-left: 8px;
    border: 1px solid #2c64d0;
    border-radius: 2px;
    background: linear-gradient(#5a98fa, #3c81f3 20%, #3c7df0);
    overflow: hidden;
}
.tasks .active {
    background: #1e52b7;
}
.tasks svg {
    flex: none;
    width: 16px;
    height: 16px;
}
.lang {
    width: 76px;
    display: flex;
    align-items: center;
    gap: 6px;
    padding-left: 9px;
}
.lang svg {
    width: 16px;
    height: 18px;
}
.tray {
    width: 84px;
    display: flex;
    align-items: center;
    background: linear-gradient(#3ab4f8, #149aee 20%, #1290e8);
}
.tray svg {
    width: 16px;
    height: 16px;
}
.tray .chev {
    width: 18px;
    height: 18px;
    margin-left: -8px;
}
.tray span {
    margin-left: 17px;
}

/* text inside the plots */
.plot text {
    font: 12px "Liberation Sans", "Noto Sans CJK SC", sans-serif;
    fill: #777;
}
.plot .axis {
    text-anchor: end;
}
.plot .lit {
    fill: #e0e0ff;
}
```

FILE: chart.js
```js
var NS = 'http://www.w3.org/2000/svg';
var price = document.getElementById('price');
var osc = document.getElementById('osc');

function add(svg, tag, attrs, text) {
    var el = document.createElementNS(NS, tag);
    for (var k in attrs) el.setAttribute(k, attrs[k]);
    if (text) el.textContent = text;
    svg.appendChild(el);
    return el;
}
function line(svg, pts, color, w, dash) {
    add(svg, 'polyline', {points: pts, fill: 'none', stroke: color, 'stroke-width': w || 1, 'stroke-dasharray': dash || 'none', 'stroke-linejoin': 'round'});
}
function rect(svg, x, y, w, h, fill, stroke) {
    add(svg, 'rect', {x: x, y: y, width: w, height: h, fill: fill, stroke: stroke || 'none'});
}
function text(svg, x, y, str, cls, fill) {
    var t = add(svg, 'text', {x: x, y: y, 'class': cls || ''}, str);
    if (fill) t.style.fill = fill;
}
function barX(i) {
    return 22.5 + 9.31 * i;
}
// value of a polyline at x
function at(pts, x) {
    var p = pts.split(' ').map(function (s) { return s.split(',').map(Number); });
    for (var i = 1; i < p.length; i++) {
        if (x <= p[i][0]) {
            return p[i-1][1] + (p[i][1] - p[i-1][1]) * (x - p[i-1][0]) / (p[i][0] - p[i-1][0]);
        }
    }
    return p[p.length-1][1];
}
function grid(svg, y) {
    line(svg, '20,' + y + ' 1256,' + y, '#333', 1, '1 3');
}
function frame(svg, top, bottom) {
    line(svg, '1256.5,' + top + ' 1256.5,' + bottom, '#444');
    line(svg, '1307.5,' + top + ' 1307.5,' + bottom, '#444');
}

/* ---------- price chart ---------- */
for (var p = 13; p >= 4; p--) {
    var y = Math.round(122 + (13 - p) * 41.2);
    grid(price, y + 0.5);
    line(price, '1257,' + (y + 0.5) + ' 1262,' + (y + 0.5), '#555');
    if (p > 4) line(price, '1257,' + (y + 21.5) + ' 1259,' + (y + 21.5), '#555');
    text(price, 1304, y + 5, p + '.00', 'axis');
}
frame(price, 98, 512);

line(price, '22,189 75,189 130,181 200,178 270,176 285,174 345,174 400,180 440,183 460,185 477,192 525,197 550,202 600,207 680,213 740,220 780,227 820,233 860,237 900,240 925,245 940,250 965,253 1000,257 1020,258 1040,264 1070,273 1100,277 1120,280 1225,278', '#0e6b0e', 4);
line(price, '107,161 115,156 124,143 210,143 213,134 535,134 553,145 571,173 579,176 600,176 608,181 617,188 628,192 665,218 702,218 711,229 738,287 745,295 860,295 876,280 884,270 897,250 960,249 975,235 985,229 998,208 1222,208', '#ffffd0');
line(price, '25,223 30,219.500 293,219.500 313,211 330,200 340,197 383,213 400,230 440,234 462,278 480,310 520,345 548,362 590,364 600,368.500 867,368.500 885,363 928,362 935,355 945,345 960,337 973,332 990,321 1008,315 1028,314 1045,308 1065,302 1085,294 1098,291 1115,294.500 1223,294.500', '#80e8a0');
line(price, '22,223 35,225 107,225 115,227 145,226 180,222 215,218 245,218 283,208 320,207 345,208 370,214 400,231 440,249 450,259 470,289 490,324 505,347 520,368 536,388 568,421 596,447 621,466 648,482 670,491 691,493 713,489 739,475 771,455 804,424 830,396 847,382 870,375 900,365 930,360 960,354 990,349 1010,344 1040,334 1062,326 1080,321 1095,320 1120,322 1135,318 1160,314 1180,308 1205,304 1223,299', '#9a30dc', 3);
line(price, '22,166 75,166 90,162 103,157 115,150 145,147 160,143 190,139 213,137 235,132 260,126 275,121 295,119 315,115 350,117 358,121 375,119 405,114 443,113 470,109 482,105 508,105 540,110 560,115 580,124 600,133 640,155 680,180 728,213 750,223 780,240 803,250 820,251 843,256 860,255 870,252 886,244 920,228 945,214 975,201 990,192 1010,186 1035,182 1055,182 1065,184 1085,182 1120,181 1140,188 1165,192 1205,197 1223,203', '#2bb5e0', 3);
line(price, '22,193 75,196 105,188 165,181 200,173 240,163 275,157 310,158 345,166 372,174 400,189 430,211 480,246 520,285 560,320 600,342 620,345 665,352 720,345 750,335 790,325 820,312 850,299 870,292 900,284 945,272 990,254 1030,243 1072,242 1090,247 1130,256 1222,250', '#dc20dc', 3);
line(price, '22,194 75,196 110,191 160,186 200,179 240,174 275,168 300,163 330,162 350,165 390,172 425,179 443,184 460,192 490,213 510,232 550,258 590,286 640,316 672,333 700,342 735,343 780,337 820,329 860,316 890,306 920,293 960,281 980,275 1000,268 1030,261 1065,255 1080,251 1130,251 1150,253 1222,252', '#fff', 3);
line(price, '300,157 345,159 380,168 420,193 450,212 500,254 550,297 600,339 640,346 665,349', '#ffff20', 3);
line(price, '400,183 430,203 480,240 520,277 560,312 600,343', '#80c870', 2);
line(price, '1078,242 1100,245 1127,251', '#ffff20', 4);

// [x, high, body top, body bottom, low]
var red = [[25,211,212,221,221],[41,199,200,212,222],[69,181,182,191,192],[78,158,173,182,185],[87,158,165,176,178],[106,143,143,159,168],[124,169,174,175,178],[134,170,175,176,178],[143,165,170,175,176],[152,150,159,170,172],[171,160,165,172,178],[199,152,152,166,168],[217,134,134,155,156],[245,145,150,151,156],[255,127,134,151,152],[273,141,147,149,150],[302,174,177,180,182],[311,174,177,180,182],[320,174,176,179,182],[348,184,192,195,196],[366,199,203,206,208],[394,232,234,240,243],[404,230,232,236,238],[413,216,219,227,243],[422,218,218,233,233],[450,278,279,280,281],[525,337,339,341,345],[534,340,341,344,345],[552,348,351,365,367],[562,341,343,352,352],[599,356,357,365,372],[608,344,345,350,356],[618,342,346,348,349],[655,349,350,363,363],[664,342,344,350,352],[702,305,312,325,327],[729,292,300,310,318],[739,284,295,300,310],[776,298,302,306,312],[795,295,298,302,306],[804,285,287,294,296],[832,285,290,294,300],[841,287,287,294,296],[850,282,285,287,291],[860,283,286,288,292],[869,258,268,284,286],[878,248,249,268,270],[906,258,262,264,268],[916,254,259,269,272],[925,242,246,254,256],[934,246,249,251,252],[962,230,230,240,248],[971,220,224,226,240],[980,203,207,227,230],[1028,234,238,240,243],[1046,246,250,254,256],[1055,250,254,262,264],[1111,287,289,294,298],[1120,268,268,285,291],[1130,250,258,266,270],[1158,234,235,255,257],[1176,229,232,236,239]];
var green = [[32,198,201,213,214],[96,157,163,168,175],[115,155,163,168,169],[162,159,159,168,169],[180,160,168,171,173],[208,146,151,158,160],[227,130,139,143,148],[236,132,140,151,154],[264,131,133,147,149],[283,142,144,171,171],[292,166,172,177,181],[329,172,174,187,188],[338,182,188,196,197],[357,188,191,210,215],[376,204,207,220,226],[385,222,224,233,237],[432,190,209,240,240],[441,245,247,261,261],[478,314,321,322,327],[487,308,315,318,320],[497,315,322,328,330],[506,328,328,342,344],[534,339,349,354,355],[543,359,361,362,363],[571,337,337,348,349],[580,350,350,363,363],[590,360,365,368,378],[636,345,349,356,363],[646,350,358,363,364],[692,328,331,335,337],[711,310,317,320,328],[748,298,300,317,322],[757,298,300,315,322],[813,282,282,291,300],[823,286,288,293,300],[888,241,242,264,264],[897,258,260,262,266],[943,248,248,254,257],[953,248,249,252,257],[990,193,193,229,229],[999,223,223,245,245],[1018,236,237,239,241],[1037,233,247,255,257],[1065,237,248,249,256],[1083,248,248,272,272],[1093,269,270,289,290],[1102,284,285,294,305],[1139,254,254,265,278],[1167,223,228,241,244],[1186,230,239,240,241],[1195,231,241,244,245],[1204,245,245,253,253]];
red.forEach(function (c) {
    line(price, c[0] + ',' + c[1] + ' ' + c[0] + ',' + c[4], '#c01818', 2);
    rect(price, c[0] - 5.5, c[2] + 0.5, 11, Math.max(c[3] - c[2], 1), '#000', '#c01818');
});
green.forEach(function (c) {
    line(price, c[0] + ',' + c[1] + ' ' + c[0] + ',' + c[4], '#0f0', 3);
    rect(price, c[0] - 6, c[2], 12, Math.max(c[3] - c[2], 2), '#0f0');
});

// ribbon columns: upper edge, lower edge, first and last bar
function columns(top, bottom, from, to, color, c1, c2) {
    for (var i = from; i <= to; i++) {
        var x = barX(i);
        var a = Math.round(at(top, x)), b = Math.round(at(bottom, x));
        rect(price, Math.round(x - 2), a, 5, Math.max(b - a, 2), color);
    }
    line(price, top, c1);
    line(price, bottom, c2);
}
columns('22,192 75,194', '22,197 75,198', 0, 6, '#3c3', '#8c4', '#060');
columns('78,193 97,184 107,179 130,177 155,173 200,166 215,162 240,156 275,151 290,155 310,163 330,169 345,175', '78,194 97,191 107,189 155,186 175,183 215,178 240,175 275,171 285,171 310,173 330,174 345,176', 6, 34, '#f66cf0', '#3a8a3a', '#b02020');
columns('348,174 400,183 420,187 443,192 465,200 490,213 510,225 530,235 560,249 590,264 620,274 655,285 690,291 720,295 860,295', '348,176 385,203 400,208 420,209 440,222 460,240 490,275 515,298 545,321 580,338 610,343 640,346 662,349 690,343 710,337 735,325 760,318 800,308 830,302 860,298', 36, 90, '#10f010', '#b02020', '#2a9a2a');
columns('868,290 880,282 915,268 950,260 972,248 980,245 1005,242 1040,243 1060,247 1080,250 1092,257 1100,262 1110,267 1145,267 1155,260 1165,256 1190,250 1210,247 1215,242 1223,234', '868,295 880,292 915,286 950,283 985,274 1005,270 1030,268 1075,266 1100,268 1145,268 1165,266 1190,263 1215,259 1223,257', 91, 129, '#f66cf0', '#3a8a3a', '#b02020');

var dots = '22,163 31,165 41,169 50,171 59,173 69,176 78,200 87,199 96,198 106,196 115,194 124,192 134,190 143,188 152,186 162,184 283,127 292,129 301,131 311,134 320,137 329,141 338,147 348,152 357,159 376,174 413,211 422,215 432,240 562,331 571,335 580,337 590,344 599,351 608,372 618,370 627,369 636,368 646,366 655,366 664,364 674,362 683,360 692,357 701,352 711,345 720,339 729,333 739,325 757,284 767,285 776,286 785,286 795,287 832,299 841,299 850,298 860,297 869,295 897,278 906,274 916,271 925,268 934,265 944,261 953,258 962,255 971,249 981,240 990,230 999,193 1009,196 1018,198 1027,200 1037,204 1046,208 1055,214 1065,219 1074,224 1083,229 1092,238 1102,248 1111,257 1120,265 1130,286 1139,285 1148,285 1158,283 1167,279 1176,276 1186,273 1195,270 1204,267 1213,263';
dots.split(' ').forEach(function (s) {
    var d = s.split(',');
    add(price, 'circle', {cx: d[0], cy: d[1], r: 3, fill: '#fff'});
});

[[460,298],[470,316],[478,333],[507,344],[516,348],[544,368],[554,368]].forEach(function (a) {
    add(price, 'path', {d: 'M' + a[0] + ' ' + (a[1] - 5) + 'l5 5h-3v6h-4v-6h-3z', fill: '#e01818', stroke: '#f4b0a0'});
});
[1028, 1140, 1205, 1214].forEach(function (x) {
    add(price, 'path', {d: 'M' + (x - 2) + ' 103l4 4m0 -4l-4 4', stroke: '#d030d0', 'stroke-width': 1.5});
});
rect(price, 1216, 169, 40, 44, '#808080');
line(price, '1216,202 1223,203', '#2bb5e0', 3);
line(price, '1207,213.500 1219,213.500', '#c01818');
add(price, 'path', {d: 'M1221 160h4v5h3l-5 6l-5 -6h3z', fill: '#10e010'});
text(price, 1218, 227, '10.79 -', '', '#ccc');
text(price, 269, 138, '12.90', '', '#999');
line(price, '256,127 268,131', '#aaa');
text(price, 601, 382, '6.78', '', '#aaa');
line(price, '595,375 591,378 595,381 591,378 602,378', '#aaa');
add(price, 'path', {d: 'M1208 502l3 4l-3 4z', fill: '#4aa0f0'});
add(price, 'path', {d: 'M1212 502l3 4l-3 4z', fill: '#e02020'});

/* ---------- oscillator ---------- */
[[80,608],[70,650],[60,690],[40,773],[30,816],[20,856]].forEach(function (g) {
    if (g[0] % 20 == 0) grid(osc, g[1] + 0.5);
    line(osc, '1257,' + (g[1] + 0.5) + ' 1260,' + (g[1] + 0.5), '#555');
    text(osc, 1304, g[1] + 5, g[0] + '.00', 'axis');
});
frame(osc, 530, 966);
line(osc, '18,949.500 1308,949.500', '#444');

line(osc, '20,566.500 1225,566.500', '#0000e8', 5);
line(osc, '22,599.500 1224,599.500', '#60d8d8', 1);
line(osc, '22,864.500 1224,864.500', '#e8a070', 1);
line(osc, '22,753.500 1224,753.500', '#888', 1);
line(osc, '22,939.500 1224,939.500', '#48c048', 1);

var R = '#b00000', G = '#486830';
[
    [G, '22,785 32,802 42,790 32,842 22,841'],
    [R, '42,788 51,760 59,753 87,602 96,592 106,553 114,597 118,622 107,606 96,635 89,655 68,740 59,769 51,775'],
    [G, '118,620 125,635 135,649 144,651 148,641 144,662 135,671 125,648'],
    [R, '147,643 153,627 161,637 171,640 171,642 161,641 153,638'],
    [G, '171,640 181,651 191,652 181,663'],
    [R, '191,652 199,608 208,621 217,573 227,587 230,608 227,601 217,601 208,632 199,630'],
    [G, '230,608 236,625 245,638 252,627 245,658 236,643'],
    [R, '251,627 255,611 259,625 255,624'],
    [G, '259,625 265,635 274,644 282,687 302,810 311,833 338,889 357,899 368,900 386,911 398,907 386,919 367,903 357,913 348,913 338,919 327,908 320,896 311,893 298,870 292,843 282,743 274,655 264,647'],
    [R, '398,907 404,904 412,877 422,855 430,885 422,877 412,893 404,907'],
    [G, '430,885 439,903 450,917 461,925 470,927 476,923 470,938 461,936 450,933 441,923'],
    [R, '476,923 487,911 497,919 487,917'],
    [G, '497,919 507,924 515,923 507,929'],
    [R, '515,923 526,917 528,921 520,922'],
    [G, '527,919 535,925 543,924 535,930'],
    [R, '544,924 560,888 568,885 572,897 580,907 580,911 576,911 568,902 558,910'],
    [G, '579,906 585,909 591,910 590,914 583,912'],
    [R, '591,911 600,875 609,825 618,788 628,767 637,790 643,817 637,810 628,812 620,825 609,860 600,897'],
    [G, '643,815 647,821 648,815 646,831'],
    [R, '647,822 656,767 666,667 677,597 684,568 693,574 701,548 711,592 720,593 730,567 739,570 741,585 739,580 730,582 720,601 712,604 701,596 693,625 685,643 675,687 666,740 656,797'],
    [G, '741,583 747,605 758,617 765,622 776,623 783,620 776,632 768,637 757,637 748,625 743,593'],
    [R, '783,620 795,603 805,568 814,568 823,579 841,568 850,552 861,553 879,532 882,555 879,552 870,555 861,562 850,564 841,574 824,584 814,582 805,588 795,608'],
    [G, '882,552 888,572 897,590 906,605 916,610 921,600 917,624 907,633 894,610 888,593'],
    [R, '921,602 925,578 935,568 944,585 953,584 962,553 971,534 982,541 984,558 982,553 971,553 962,572 954,586 945,587 935,582 925,595'],
    [G, '984,556 989,590 1001,637 1010,660 1019,680 1028,693 1037,737 1056,803 1066,821 1075,825 1092,882 1103,887 1112,883 1103,908 1093,923 1084,900 1080,867 1075,847 1066,861 1056,855 1046,820 1037,783 1028,721 1019,718 1010,710 999,694 992,627'],
    [R, '1112,883 1121,833 1130,793 1140,788 1149,767 1158,660 1177,591 1187,598 1196,620 1204,647 1196,638 1187,641 1177,656 1162,727 1149,800 1139,818 1130,833 1121,860'],
    [G, '1203,642 1205,648 1207,640 1204,654'],
    [R, '1205,648 1207,630 1214,570 1224,547 1224,585 1214,610']
].forEach(function (s) {
    add(osc, 'polygon', {points: s[1], fill: s[0]});
});

// end of each momentum column, the middle axis is at 753
var bars = [790,798,795,781,769,753,735,718,707,687,685,690,690,682,668,666,669,682,692,689,690,673,668,678,690,693,705,717,747,783,805,820,824,829,838,839,849,853,861,876,882,879,857,832,826,828,829,827,821,808,794,785,780,775,769,768,765,758,748,742,744,746,745,740,733,732,734,742,744,740,737,732,729,723,719,717,712,706,711,716,721,725,728,728,725,725,727,729,731,731,733,729,718,714,714,717,721,720,719,722,725,721,716,706,707,719,730,738,744,756,763,770,773,772,777,787,798,801,793,778,767,756,736,729,720,718,722,730,725,701];
bars.forEach(function (end, i) {
    var x = Math.floor(barX(i));
    if (end < 753) rect(osc, x, end, 1, 753 - end, '#b01818');
    else rect(osc, x, 754, 1, end - 753, '#58c8c0');
});

function face(x, y, happy) {
    add(osc, 'circle', {cx: x, cy: y, r: 7.5, fill: happy ? '#fbf3a8' : '#f8d820', stroke: happy ? '#e8dc90' : '#b89010'});
    add(osc, 'path', {d: 'M' + (x - 2.5) + ' ' + (y - 4) + 'v3M' + (x + 2.5) + ' ' + (y - 4) + 'v3', stroke: happy ? '#222' : '#a88410', 'stroke-width': 2});
    add(osc, 'path', {d: happy ? 'M' + (x - 4) + ' ' + (y + 1) + 'q4 5 8 0' : 'M' + (x - 3) + ' ' + (y + 4) + 'q3 -3 6 0', fill: 'none', stroke: happy ? '#222' : '#a88410', 'stroke-width': 1.5});
}
[[106,549],[218,566],[683,562],[701,542],[730,559],[805,560],[841,564],[935,563],[962,547],[1224,542]].forEach(function (f) { face(f[0], f[1], false); });
[[301,880],[432,895],[1083,899]].forEach(function (f) { face(f[0], f[1], true); });

text(osc, 1223, 603, '顶', '', '#60d8d8');
text(osc, 1223, 868, '低', '', '#e8a070');
rect(osc, 1257, 729, 50, 17, '#000080');
text(osc, 1258, 742, '46.82', 'lit');

// dates
[[161,'11'],[365,'12'],[570,'1'],[710,'2'],[905,'3'],[1110,'4'],[1212,'8']].forEach(function (d) {
    line(osc, (d[0] + 0.5) + ',949 ' + (d[0] + 0.5) + ',966', '#444');
    text(osc, d[0] + 2, 962, d[1]);
});
[212,416,468,519,605,640,675,759,808,856,956,1008,1059,1136,1161,1187].forEach(function (x) {
    line(osc, (x + 0.5) + ',949 ' + (x + 0.5) + ',953', '#555');
});
text(osc, 22, 962, '2011年');
rect(osc, 262, 950, 78, 16, '#000080');
text(osc, 264, 962, '2011/11/16/三', 'lit');
text(osc, 1270, 962, '日线', '', '#ccc');
```
